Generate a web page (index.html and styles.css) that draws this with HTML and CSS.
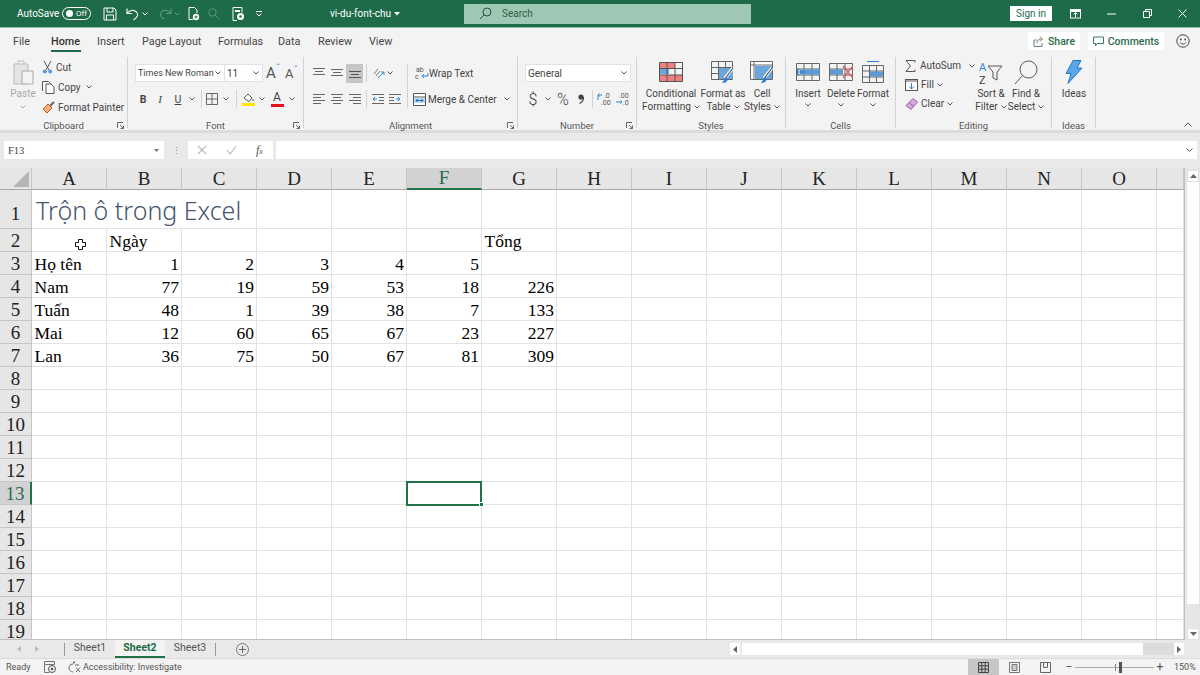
FILE: index.html
```html
<!DOCTYPE html>
<html lang="vi">
<head>
<meta charset="utf-8">
<title>vi-du-font-chu - Excel</title>
<link rel="stylesheet" href="styles.css">
</head>
<body>
<div class="app">
  <header class="titlebar">
    <span class="autosave">AutoSave</span>
    <span class="toggle"><i class="knob"></i><span>Off</span></span>
    <svg class="qa qa-save" width="14" height="14" viewBox="0 0 14 14"><path d="M1 1h10l2 2v10H1z M4 1v4h6V1 M3.500 13V8h7v5" fill="none" stroke="#fff"/></svg>
    <svg class="qa qa-undo" width="13" height="14" viewBox="0 0 13 14"><path d="M1 1.500v5h5 M1.500 6C3.500 3 8 2.500 10.500 5c2 2.200 1.500 5-3 8" fill="none" stroke="#fff" stroke-width="1.100"/></svg>
    <svg class="qa qa-ch" width="6" height="4" viewBox="0 0 6 4"><path d="M.5.500 3 3 5.500.5" fill="none" stroke="#fff"/></svg>
    <svg class="qa qa-redo" width="13" height="13" viewBox="0 0 13 13"><path d="M12 1.500v5H7 M11.500 6C9.500 3 5 2.500 2.500 5c-2 2.200-1.500 5 3 7" fill="none" stroke="#5f9a80" stroke-width="1.100"/></svg>
    <svg class="qa qa-ch2" width="6" height="4" viewBox="0 0 6 4"><path d="M.5.500 3 3 5.500.5" fill="none" stroke="#5f9a80"/></svg>
    <svg class="qa qa-doc" width="12" height="14" viewBox="0 0 12 14"><path d="M1 .5h5.500L9 3v3M1 .5v12h4" fill="none" stroke="#fff"/><circle cx="8" cy="10" r="3.200" fill="#fff"/><path d="M6.500 10h3M8 8.500v3" stroke="#1d6b48"/></svg>
    <svg class="qa qa-find" width="12" height="12" viewBox="0 0 12 12"><circle cx="4.500" cy="4.500" r="3.700" fill="none" stroke="#5f9a80"/><path d="M7.500 7.500 11.500 11.500" stroke="#5f9a80"/></svg>
    <svg class="qa qa-doc2" width="13" height="14" viewBox="0 0 13 14"><path d="M1 .5h9v5M1 .5v13h4" fill="none" stroke="#fff"/><rect x="3" y="3" width="5" height="2" fill="#fff"/><circle cx="8.500" cy="9.500" r="3.500" fill="#fff"/><circle cx="8.500" cy="9.500" r="1.200" fill="#1d6b48"/></svg>
    <svg class="qa qa-more" width="8" height="6" viewBox="0 0 8 6"><path d="M1 .5h6M1.500 2.500 4 5l2.500-2.500" fill="none" stroke="#fff"/></svg>
    <span class="filename">vi-du-font-chu<svg width="6" height="4" viewBox="0 0 6 4"><path d="M0 0h6L3 3.500z" fill="#fff"/></svg></span>
    <div class="search">
      <svg width="13" height="13" viewBox="0 0 13 13"><circle cx="8" cy="5" r="4" fill="none" stroke="#20563d"/><path d="M5 8 1 12" stroke="#20563d"/></svg>
      <span>Search</span>
    </div>
    <span class="signin">Sign in</span>
    <svg class="win win-ribbon" width="11" height="10" viewBox="0 0 11 10"><rect x=".5" y=".5" width="10" height="8.500" fill="none" stroke="#fff"/><path d="M.5 2h10" stroke="#fff" stroke-width="2"/><path d="M5.500 8V4M3.500 5.500 5.500 3.500l2 2" fill="none" stroke="#fff"/></svg>
    <svg class="win win-min" width="9" height="2" viewBox="0 0 9 2"><path d="M0 1h9" stroke="#fff"/></svg>
    <svg class="win win-max" width="9" height="9" viewBox="0 0 9 9"><path d="M.5 2.500h6v6h-6z M2.500 2.500v-2h6v6h-2" fill="none" stroke="#fff"/></svg>
    <svg class="win win-close" width="9" height="9" viewBox="0 0 9 9"><path d="m.5.500 8 8M8.500.5l-8 8" stroke="#fff"/></svg>
  </header>

  <nav class="tabs">
    <span class="tab t-file">File</span>
    <span class="tab t-home">Home</span>
    <span class="tab t-insert">Insert</span>
    <span class="tab t-layout">Page Layout</span>
    <span class="tab t-formulas">Formulas</span>
    <span class="tab t-data">Data</span>
    <span class="tab t-review">Review</span>
    <span class="tab t-view">View</span>
    <span class="pill share"><svg width="11" height="11" viewBox="0 0 11 11"><path d="M3.500 4H1v6.500h8V7 M4 7c0-3 2-4 4.500-4M7 .5 9.500 3 7 5.500" fill="none" stroke="#6b7d74"/></svg>Share</span>
    <span class="pill comments"><svg width="11" height="11" viewBox="0 0 11 11"><path d="M.5 1h10v6.500H4L2.500 10V7.500H.5z" fill="none" stroke="#3c7a5d"/></svg>Comments</span>
    <svg class="smiley" width="14" height="14" viewBox="0 0 14 14"><circle cx="7" cy="7" r="6.200" fill="none" stroke="#444"/><circle cx="4.800" cy="5.500" r=".9" fill="#444"/><circle cx="9.200" cy="5.500" r=".9" fill="#444"/><path d="M4 8.500c1.500 2 4.500 2 6 0" fill="none" stroke="#444"/></svg>
  </nav>

  <section class="ribbon">
    <div class="group g-clip">
      <div class="body">
        <div class="paste">
          <svg width="24" height="25" viewBox="0 0 24 25"><path d="M3 4h14v20H3z" fill="#e4e4e4" stroke="#bbb"/><path d="M7 4V1h6v3" fill="none" stroke="#bbb"/><path d="M11 11h11v13H11z" fill="#f3f3f3" stroke="#aaa"/></svg>
          <span class="dim">Paste</span>
          <svg class="chev" width="6" height="4" viewBox="0 0 6 4"><path d="M.5.500 3 3 5.500.5" fill="none" stroke="#aaa"/></svg>
        </div>
        <div class="clip-list">
          <div class="clip-row"><svg width="11" height="13" viewBox="0 0 11 13"><path d="M2 0 7 9M9 0 4 9" stroke="#555" fill="none"/><circle cx="2.800" cy="10.500" r="2" fill="#5b9bd5"/><circle cx="8.200" cy="10.500" r="2" fill="#5b9bd5"/></svg><span>Cut</span></div>
          <div class="clip-row"><svg width="13" height="13" viewBox="0 0 13 13"><path d="M.5 10V.5h6l2 2M4 3h5l3 3v6.500H4z" fill="#fff" stroke="#555"/></svg><span>Copy</span><svg class="chev-s" width="6" height="4" viewBox="0 0 6 4"><path d="M.5.500 3 3 5.500.5" fill="none" stroke="#555"/></svg></div>
          <div class="clip-row"><svg width="13" height="13" viewBox="0 0 13 13"><path d="M1 8 6 3l4 4-5 5z" fill="#f4b183" stroke="#c55a11"/><path d="M8 5l4-4" stroke="#666" stroke-width="2"/></svg><span>Format Painter</span></div>
        </div>
      </div>
      <div class="label">Clipboard<svg class="launch" width="7" height="7" viewBox="0 0 7 7"><path d="M.5 6V.5H6M3 3l3.500 3.500M6.500 3.500v3h-3" fill="none" stroke="#666"/></svg></div>
    </div>

    <div class="group g-font">
      <div class="body col">
        <div class="row first">
          <div class="select font-name"><span>Times New Roman</span><svg width="6" height="4" viewBox="0 0 6 4"><path d="M.5.500 3 3 5.500.5" fill="none" stroke="#555"/></svg></div>
          <div class="select font-size"><span>11</span><svg width="6" height="4" viewBox="0 0 6 4"><path d="M.5.500 3 3 5.500.5" fill="none" stroke="#555"/></svg></div>
          <span class="grow">A<small>ˆ</small></span>
          <span class="shrink">A<small>ˇ</small></span>
        </div>
        <div class="row second">
          <b class="btn w16 fb">B</b><i class="btn w18 fi">I</i><u class="btn w18 fu">U</u>
          <span class="btn w10"><svg width="6" height="4" viewBox="0 0 6 4"><path d="M.5.500 3 3 5.500.5" fill="none" stroke="#555"/></svg></span>
          <span class="btn w8"><i class="vsep"></i></span>
          <span class="btn w14"><svg width="12" height="12" viewBox="0 0 12 12"><path d="M.5.500h11v11H.5zM6 .5v11M.5 6h11" fill="none" stroke="#666"/></svg></span>
          <span class="btn w14"><svg width="6" height="4" viewBox="0 0 6 4"><path d="M.5.500 3 3 5.500.5" fill="none" stroke="#555"/></svg></span>
          <span class="btn w6"><i class="vsep"></i></span>
          <span class="btn w18"><svg width="13" height="14" viewBox="0 0 13 14"><path d="M2 6 6 2l4 4-3 3.500z" fill="#fff" stroke="#555"/><path d="M11 7v2" stroke="#555"/><rect y="11" width="13" height="3" fill="#ffe600"/></svg></span>
          <span class="btn w10"><svg width="6" height="4" viewBox="0 0 6 4"><path d="M.5.500 3 3 5.500.5" fill="none" stroke="#555"/></svg></span>
          <span class="btn w20 fa">A<i class="redbar"></i></span>
          <span class="btn w9"><svg width="6" height="4" viewBox="0 0 6 4"><path d="M.5.500 3 3 5.500.5" fill="none" stroke="#555"/></svg></span>
        </div>
      </div>
      <div class="label">Font<svg class="launch" width="7" height="7" viewBox="0 0 7 7"><path d="M.5 6V.5H6M3 3l3.500 3.500M6.500 3.500v3h-3" fill="none" stroke="#666"/></svg></div>
    </div>

    <div class="group g-align">
      <div class="body">
        <div class="col align-left">
          <div class="row first">
            <span class="btn w18 tall"><svg width="12" height="10" viewBox="0 0 12 10"><path d="M0 .5h12M2 3.500h8M0 6.500h12" stroke="#666"/></svg></span>
            <span class="btn w18 tall"><svg width="12" height="10" viewBox="0 0 12 10"><path d="M0 1.500h12M2 4.500h8M0 7.500h12" stroke="#666"/></svg></span>
            <span class="btn w17 tall on"><svg width="12" height="10" viewBox="0 0 12 10"><path d="M0 3.500h12M2 6.500h8M0 9.500h12" stroke="#555"/></svg></span>
            <span class="btn w7 tall"><i class="vsep"></i></span>
            <span class="btn w16 tall"><svg width="13" height="13" viewBox="0 0 13 13"><path d="m2 7 4-5M4 9l4-5" stroke="#777"/><path d="M6 11 12 5M12 5v3M12 5H9" fill="none" stroke="#2b88d8"/></svg></span>
            <span class="btn w8 tall"><svg width="6" height="4" viewBox="0 0 6 4"><path d="M.5.500 3 3 5.500.5" fill="none" stroke="#555"/></svg></span>
          </div>
          <div class="row second">
            <span class="btn w18"><svg width="12" height="10" viewBox="0 0 12 10"><path d="M0 .5h12M0 3.500h8M0 6.500h12M0 9.500h8" stroke="#666"/></svg></span>
            <span class="btn w18"><svg width="12" height="10" viewBox="0 0 12 10"><path d="M0 .5h12M2 3.500h8M0 6.500h12M2 9.500h8" stroke="#666"/></svg></span>
            <span class="btn w17"><svg width="12" height="10" viewBox="0 0 12 10"><path d="M0 .5h12M4 3.500h8M0 6.500h12M4 9.500h8" stroke="#666"/></svg></span>
            <span class="btn w7"><i class="vsep"></i></span>
            <span class="btn w16"><svg width="12" height="10" viewBox="0 0 12 10"><path d="M0 .5h12M7 3.500h5M7 6.500h5M0 9.500h12" stroke="#666"/><path d="M5 5H1M3 3 1 5l2 2" fill="none" stroke="#2b88d8"/></svg></span>
            <span class="btn w18"><svg width="12" height="10" viewBox="0 0 12 10"><path d="M0 .5h12M0 3.500h5M0 6.500h5M0 9.500h12" stroke="#666"/><path d="M7 5h4M9 3l2 2-2 2" fill="none" stroke="#2b88d8"/></svg></span>
          </div>
        </div>
        <i class="align-sep"></i>
        <div class="col align-right">
          <div class="row first"><span class="wrap-item"><svg width="14" height="14" viewBox="0 0 14 14"><text x="1" y="6" class="ico-txt">ab</text><text x="0" y="13" class="ico-txt">c</text><path d="M13 7v3H7M9 8l-2 2 2 2" fill="none" stroke="#2b88d8"/></svg>Wrap Text</span></div>
          <div class="row second"><span class="wrap-item"><svg class="merge-ico" width="13" height="13" viewBox="0 0 13 13"><path d="M.5.500h12v12H.5z" fill="#fff" stroke="#555"/><path d="M.5 4h12" stroke="#555"/><rect x="1" y="5" width="11" height="5" fill="#bcdcf4"/><path d="M3 7.500h7M3 7.500l1.500-1.500M3 7.500 4.500 9M10 7.500 8.500 6M10 7.500 8.500 9" fill="none" stroke="#106ebe"/></svg>Merge &amp; Center<svg class="merge-ch" width="6" height="4" viewBox="0 0 6 4"><path d="M.5.500 3 3 5.500.5" fill="none" stroke="#555"/></svg></span></div>
        </div>
      </div>
      <div class="label">Alignment<svg class="launch" width="7" height="7" viewBox="0 0 7 7"><path d="M.5 6V.5H6M3 3l3.500 3.500M6.500 3.500v3h-3" fill="none" stroke="#666"/></svg></div>
    </div>

    <div class="group g-num">
      <div class="body col">
        <div class="row first"><div class="select num-format"><span>General</span><svg width="6" height="4" viewBox="0 0 6 4"><path d="M.5.500 3 3 5.500.5" fill="none" stroke="#555"/></svg></div></div>
        <div class="row second">
          <span class="btn w16 big-sym">$</span>
          <span class="btn w14"><svg width="6" height="4" viewBox="0 0 6 4"><path d="M.5.500 3 3 5.500.5" fill="none" stroke="#555"/></svg></span>
          <span class="btn w16 big-sym">%</span>
          <span class="btn w19"><svg width="6" height="10" viewBox="0 0 6 10"><circle cx="3" cy="3" r="2.600" fill="#444"/><path d="M5.600 3C5.600 6 4 8.500 1.500 9.500" fill="none" stroke="#444" stroke-width="1.300"/></svg></span>
          <span class="btn w5"><i class="vsep"></i></span>
          <span class="btn w18"><svg width="14" height="14" viewBox="0 0 14 14"><text x="7" y="6" class="ico-num">.0</text><text x="4" y="13" class="ico-num">.00</text><path d="M5 3H1M2.500 1.500 1 3l1.500 1.500M1 3v5" fill="none" stroke="#2b88d8"/></svg></span>
          <span class="btn w18"><svg width="14" height="14" viewBox="0 0 14 14"><text x="4" y="6" class="ico-num">.00</text><text x="8" y="13" class="ico-num">.0</text><path d="M1 10h6M5.500 8.500 7 10l-1.500 1.500" fill="none" stroke="#2b88d8"/></svg></span>
        </div>
      </div>
      <div class="label">Number<svg class="launch" width="7" height="7" viewBox="0 0 7 7"><path d="M.5 6V.5H6M3 3l3.500 3.500M6.500 3.500v3h-3" fill="none" stroke="#666"/></svg></div>
    </div>

    <div class="group g-styles">
      <div class="body">
        <div class="big b-cond">
          <div class="big-ico"><svg width="24" height="20" viewBox="0 0 24 20"><rect x="1" y="1" width="15" height="5" fill="#f08080"/><rect x="1" y="7" width="9" height="5" fill="#6aa5dc"/><rect x="1" y="13" width="22" height="6" fill="#f08080"/><path d="M.5.500h23v19H.5zM8 .5v19M16 .5v19M.5 6.500h23M.5 13h23" fill="none" stroke="#555"/></svg></div>
          <span>Conditional</span><span>Formatting<svg class="inl" width="6" height="4" viewBox="0 0 6 4"><path d="M.5.500 3 3 5.500.5" fill="none" stroke="#555"/></svg></span>
        </div>
        <div class="big b-fmt">
          <div class="big-ico"><svg width="24" height="23" viewBox="0 0 24 23"><path d="M.5.500h21v18H.5zM7.500.5v18M14.500.5v18M.5 6.500h21M.5 12.500h21" fill="none" stroke="#666"/><rect x="8" y="7" width="14" height="11" fill="#6aa5dc"/><path d="M22 7 14 17" stroke="#fff" stroke-width="3"/><path d="M22 7 14.500 17" stroke="#555" stroke-width="1.200"/><path d="M15 16l-4 6c3 0 5-1 6-4z" fill="#2b7cd3"/></svg></div>
          <span>Format as</span><span>Table<svg class="inl" width="6" height="4" viewBox="0 0 6 4"><path d="M.5.500 3 3 5.500.5" fill="none" stroke="#555"/></svg></span>
        </div>
        <div class="big b-cell">
          <div class="big-ico"><svg width="24" height="23" viewBox="0 0 24 23"><path d="M.5.500h22v18H.5z" fill="#fff" stroke="#666"/><path d="M.5 4h22M4 .5v18" stroke="#666"/><rect x="5" y="5" width="17" height="13" fill="#6aa5dc"/><path d="M22 7 14 17" stroke="#fff" stroke-width="3"/><path d="M22 7 14.500 17" stroke="#555" stroke-width="1.200"/><path d="M15 16l-4 6c3 0 5-1 6-4z" fill="#2b7cd3"/></svg></div>
          <span>Cell</span><span>Styles<svg class="inl" width="6" height="4" viewBox="0 0 6 4"><path d="M.5.500 3 3 5.500.5" fill="none" stroke="#555"/></svg></span>
        </div>
      </div>
      <div class="label">Styles</div>
    </div>

    <div class="group g-cells">
      <div class="body">
        <div class="big b-ins">
          <div class="big-ico"><svg width="24" height="20" viewBox="0 0 24 20"><path d="M.5 1.500h23v17H.5zM8 1.500v17M16 1.500v17M.5 7h23M.5 13h23" fill="none" stroke="#666"/><rect x="4" y="7.500" width="20" height="5" fill="#5b9bd5"/><path d="M8 10H0M3 7l-3 3 3 3" fill="none" stroke="#1f6fb5" stroke-width="1.200"/></svg></div>
          <span>Insert</span><svg class="chev" width="6" height="4" viewBox="0 0 6 4"><path d="M.5.500 3 3 5.500.5" fill="none" stroke="#555"/></svg>
        </div>
        <div class="big b-del">
          <div class="big-ico"><svg width="24" height="20" viewBox="0 0 24 20"><path d="M.5 1.500h23v17H.5zM8 1.500v17M16 1.500v17M.5 7h23M.5 13h23" fill="#f3f3f3" stroke="#666"/><rect x="1" y="7.500" width="13" height="5" fill="#5b9bd5"/><path d="m14 4 10 12M24 4 14 16" stroke="#e0584f" stroke-width="1.200"/></svg></div>
          <span>Delete</span><svg class="chev" width="6" height="4" viewBox="0 0 6 4"><path d="M.5.500 3 3 5.500.5" fill="none" stroke="#555"/></svg>
        </div>
        <div class="big b-for">
          <div class="big-ico"><svg width="22" height="23" viewBox="0 0 22 23"><path d="M5 .5h12" stroke="#2b7cd3"/><path d="M.5 4.500h21v17H.5zM7.500 4.500v17M14.500 4.500v17M.5 10h21M.5 16h21" fill="none" stroke="#666"/><rect x="8" y="10.500" width="13" height="5" fill="#5b9bd5"/></svg></div>
          <span>Format</span><svg class="chev" width="6" height="4" viewBox="0 0 6 4"><path d="M.5.500 3 3 5.500.5" fill="none" stroke="#555"/></svg>
        </div>
      </div>
      <div class="label">Cells</div>
    </div>

    <div class="group g-edit">
      <div class="body">
        <div class="edit-list">
          <div class="edit-row"><svg class="sum" width="11" height="12" viewBox="0 0 11 12"><path d="M10 2.500V.5H1l4.500 5.500L1 11.500h9V9.500" fill="none" stroke="#555"/></svg><span>AutoSum</span><svg class="auto-ch" width="6" height="4" viewBox="0 0 6 4"><path d="M.5.500 3 3 5.500.5" fill="none" stroke="#555"/></svg></div>
          <div class="edit-row"><svg width="13" height="12" viewBox="0 0 13 12"><rect x=".5" y=".5" width="12" height="11" fill="#fff" stroke="#555"/><path d="M.5 2h12" stroke="#555"/><path d="M6.500 4v6M4 7.500 6.500 10 9 7.500" fill="none" stroke="#2b7cd3"/></svg><span>Fill<svg class="inl" width="6" height="4" viewBox="0 0 6 4"><path d="M.5.500 3 3 5.500.5" fill="none" stroke="#555"/></svg></span></div>
          <div class="edit-row"><svg width="13" height="12" viewBox="0 0 13 12"><path d="M8 .5 12.500 4 6 11.500 1 7.500z" fill="#d8a8dc" stroke="#a35dab"/><path d="M4 4.500 9 8.500" stroke="#a35dab"/></svg><span>Clear<svg class="inl" width="6" height="4" viewBox="0 0 6 4"><path d="M.5.500 3 3 5.500.5" fill="none" stroke="#555"/></svg></span></div>
        </div>
        <div class="big b-sort">
          <div class="big-ico"><svg width="24" height="26" viewBox="0 0 24 26"><text x="0" y="12" class="ico-az blue">A</text><text x="0" y="25" class="ico-az">Z</text><path d="M9 7h14l-5 6v8l-4-2v-6z" fill="none" stroke="#555"/></svg></div>
          <span>Sort &amp;</span><span>Filter<svg class="inl" width="6" height="4" viewBox="0 0 6 4"><path d="M.5.500 3 3 5.500.5" fill="none" stroke="#555"/></svg></span>
        </div>
        <div class="big b-find">
          <div class="big-ico"><svg width="24" height="25" viewBox="0 0 24 25"><circle cx="14.500" cy="9.500" r="8.500" fill="none" stroke="#555"/><path d="M8.500 15.500 1 24" stroke="#555"/></svg></div>
          <span>Find &amp;</span><span>Select<svg class="inl" width="6" height="4" viewBox="0 0 6 4"><path d="M.5.500 3 3 5.500.5" fill="none" stroke="#555"/></svg></span>
        </div>
      </div>
      <div class="label">Editing</div>
    </div>

    <div class="group g-ideas">
      <div class="body">
        <div class="big b-ideas">
          <div class="big-ico"><svg width="18" height="24" viewBox="0 0 18 24"><path d="M8 .5h8L12 8h5L3 23.500l3-10H1z" fill="#5ba7e6" stroke="#1f78c8"/></svg></div>
          <span>Ideas</span>
        </div>
      </div>
      <div class="label">Ideas</div>
    </div>
    <svg class="collapse" width="8" height="5" viewBox="0 0 8 5"><path d="M.5 4.500 4 1l3.500 3.500" fill="none" stroke="#555"/></svg>
  </section>

  <section class="formula">
    <div class="namebox"><span>F13</span><svg width="5" height="3" viewBox="0 0 5 3"><path d="M0 0h5L2.500 3z" fill="#777"/></svg></div>
    <span class="dots"></span>
    <div class="fx-box">
      <svg width="10" height="10" viewBox="0 0 10 10"><path d="m1 1 8 8M9 1 1 9" stroke="#bbb" stroke-width="1.200"/></svg>
      <svg width="11" height="10" viewBox="0 0 11 10"><path d="m1 5 3 4 6-8" fill="none" stroke="#bbb" stroke-width="1.200"/></svg>
      <i class="fx">f<small>x</small></i>
    </div>
    <div class="fx-input"><svg width="7" height="4" viewBox="0 0 7 4"><path d="m.5.500 3 3 3-3" fill="none" stroke="#555"/></svg></div>
  </section>

  <main class="sheet-area">
    <div class="grid-wrap">
      <table class="sheet">
        <colgroup><col class="c-hdr"><col class="c-w"><col class="c-w"><col class="c-w"><col class="c-w"><col class="c-w"><col class="c-w"><col class="c-w"><col class="c-w"><col class="c-w"><col class="c-w"><col class="c-w"><col class="c-w"><col class="c-w"><col class="c-w"><col class="c-w"><col class="c-p"></colgroup>
        <thead>
          <tr class="r-head"><th class="corner"><svg width="17" height="16" viewBox="0 0 17 16"><path d="M16 0v16H0z" fill="#b5b5b5"/></svg></th><th>A</th><th>B</th><th>C</th><th>D</th><th>E</th><th class="on-col">F</th><th>G</th><th>H</th><th>I</th><th>J</th><th>K</th><th>L</th><th>M</th><th>N</th><th>O</th><th></th></tr>
        </thead>
        <tbody>
          <tr class="r1"><th>1</th><td colspan="3" class="title">Trộn ô trong Excel</td><td></td><td></td><td></td><td></td><td></td><td></td><td></td><td></td><td></td><td></td><td></td><td></td><td></td></tr>
          <tr><th>2</th><td class="has-cursor"><svg class="cursor" width="11" height="11" viewBox="0 0 11 11"><path d="M3.500.5h4v3h3v4h-3v3h-4v-3h-3v-4h3z" fill="#fff" stroke="#111"/></svg></td><td>Ngày</td><td></td><td></td><td></td><td></td><td>Tổng</td><td></td><td></td><td></td><td></td><td></td><td></td><td></td><td></td><td></td></tr>
          <tr><th>3</th><td>Họ tên</td><td class="n">1</td><td class="n">2</td><td class="n">3</td><td class="n">4</td><td class="n">5</td><td></td><td></td><td></td><td></td><td></td><td></td><td></td><td></td><td></td><td></td></tr>
          <tr><th>4</th><td>Nam</td><td class="n">77</td><td class="n">19</td><td class="n">59</td><td class="n">53</td><td class="n">18</td><td class="n">226</td><td></td><td></td><td></td><td></td><td></td><td></td><td></td><td></td><td></td></tr>
          <tr><th>5</th><td>Tuấn</td><td class="n">48</td><td class="n">1</td><td class="n">39</td><td class="n">38</td><td class="n">7</td><td class="n">133</td><td></td><td></td><td></td><td></td><td></td><td></td><td></td><td></td><td></td></tr>
          <tr><th>6</th><td>Mai</td><td class="n">12</td><td class="n">60</td><td class="n">65</td><td class="n">67</td><td class="n">23</td><td class="n">227</td><td></td><td></td><td></td><td></td><td></td><td></td><td></td><td></td><td></td></tr>
          <tr><th>7</th><td>Lan</td><td class="n">36</td><td class="n">75</td><td class="n">50</td><td class="n">67</td><td class="n">81</td><td class="n">309</td><td></td><td></td><td></td><td></td><td></td><td></td><td></td><td></td><td></td></tr>
          <tr><th>8</th><td></td><td></td><td></td><td></td><td></td><td></td><td></td><td></td><td></td><td></td><td></td><td></td><td></td><td></td><td></td><td></td></tr>
          <tr><th>9</th><td></td><td></td><td></td><td></td><td></td><td></td><td></td><td></td><td></td><td></td><td></td><td></td><td></td><td></td><td></td><td></td></tr>
          <tr><th>10</th><td></td><td></td><td></td><td></td><td></td><td></td><td></td><td></td><td></td><td></td><td></td><td></td><td></td><td></td><td></td><td></td></tr>
          <tr><th>11</th><td></td><td></td><td></td><td></td><td></td><td></td><td></td><td></td><td></td><td></td><td></td><td></td><td></td><td></td><td></td><td></td></tr>
          <tr><th>12</th><td></td><td></td><td></td><td></td><td></td><td></td><td></td><td></td><td></td><td></td><td></td><td></td><td></td><td></td><td></td><td></td></tr>
          <tr><th class="on-row">13</th><td></td><td></td><td></td><td></td><td></td><td class="selected"></td><td></td><td></td><td></td><td></td><td></td><td></td><td></td><td></td><td></td><td></td></tr>
          <tr><th>14</th><td></td><td></td><td></td><td></td><td></td><td></td><td></td><td></td><td></td><td></td><td></td><td></td><td></td><td></td><td></td><td></td></tr>
          <tr><th>15</th><td></td><td></td><td></td><td></td><td></td><td></td><td></td><td></td><td></td><td></td><td></td><td></td><td></td><td></td><td></td><td></td></tr>
          <tr><th>16</th><td></td><td></td><td></td><td></td><td></td><td></td><td></td><td></td><td></td><td></td><td></td><td></td><td></td><td></td><td></td><td></td></tr>
          <tr><th>17</th><td></td><td></td><td></td><td></td><td></td><td></td><td></td><td></td><td></td><td></td><td></td><td></td><td></td><td></td><td></td><td></td></tr>
          <tr><th>18</th><td></td><td></td><td></td><td></td><td></td><td></td><td></td><td></td><td></td><td></td><td></td><td></td><td></td><td></td><td></td><td></td></tr>
          <tr><th>19</th><td></td><td></td><td></td><td></td><td></td><td></td><td></td><td></td><td></td><td></td><td></td><td></td><td></td><td></td><td></td><td></td></tr>
        </tbody>
      </table>
    </div>
    <div class="vscroll">
      <span class="sb-btn"><svg width="7" height="4" viewBox="0 0 7 4"><path d="M0 4h7L3.500 0z" fill="#666"/></svg></span>
      <span class="sb-thumb"></span>
      <span class="sb-btn"><svg width="7" height="4" viewBox="0 0 7 4"><path d="M0 0h7L3.500 4z" fill="#666"/></svg></span>
    </div>
  </main>

  <section class="sheetbar">
    <span class="nav-arrows"><svg width="4" height="6" viewBox="0 0 4 6"><path d="M4 0v6L0 3z" fill="#bbb"/></svg><svg width="4" height="6" viewBox="0 0 4 6"><path d="M0 0v6l4-3z" fill="#bbb"/></svg></span>
    <span class="sheet-sep"></span>
    <span class="sheet-tab">Sheet1</span>
    <span class="sheet-tab active">Sheet2</span>
    <span class="sheet-tab">Sheet3</span>
    <span class="sheet-sep"></span>
    <svg class="add-sheet" width="13" height="13" viewBox="0 0 13 13"><circle cx="6.500" cy="6.500" r="6" fill="none" stroke="#777"/><path d="M3 6.500h7M6.500 3v7" stroke="#666"/></svg>
    <div class="hscroll">
      <span class="hs-btn"><svg width="4" height="7" viewBox="0 0 4 7"><path d="M4 0v7L0 3.500z" fill="#666"/></svg></span>
      <span class="hs-thumb"></span>
      <span class="hs-track"></span>
      <span class="hs-btn"><svg width="4" height="7" viewBox="0 0 4 7"><path d="M0 0v7l4-3.500z" fill="#666"/></svg></span>
    </div>
  </section>

  <footer class="status">
    <span class="ready">Ready</span>
    <svg class="macro" width="12" height="12" viewBox="0 0 12 12"><path d="M.5.500h10v3H.5zM.5 3.500v8h5" fill="none" stroke="#777"/><circle cx="8" cy="8" r="3.500" fill="none" stroke="#555"/><circle cx="8" cy="8" r="1.300" fill="#555"/></svg>
    <svg class="access" width="13" height="12" viewBox="0 0 13 12"><circle cx="6" cy="1.500" r="1" fill="#555"/><path d="M5 3C2 3 1 5 1 7s2 4 4 4M7 4h4M8 6.500l4 4.500M12 6.500 8 11" fill="none" stroke="#666"/></svg>
    <span class="access-txt">Accessibility: Investigate</span>
    <div class="views">
      <span class="view on"><svg width="11" height="11" viewBox="0 0 11 11"><path d="M.5.500h10v10H.5zM3.800.5v10M7.200.5v10M.5 3.800h10M.5 7.200h10" fill="none" stroke="#444"/></svg></span>
      <span class="view"><svg width="11" height="11" viewBox="0 0 11 11"><path d="M.5.500h10v10H.5z" fill="none" stroke="#777"/><path d="M3 2.500h5v6H3z" fill="#ccc" stroke="#777"/></svg></span>
      <span class="view"><svg width="11" height="11" viewBox="0 0 11 11"><path d="M.5.500h10v10H.5zM3.500.5v5h4v-5" fill="none" stroke="#666"/></svg></span>
    </div>
    <div class="zoom">
      <span class="zm-sym">−</span>
      <div class="slider"><i class="tick"></i><i class="thumb"></i></div>
      <span class="zm-sym">+</span>
      <span class="zm-val">150%</span>
    </div>
  </footer>
</div>
</body>
</html>
```
FILE: styles.css
```css
* { box-sizing: border-box; }
html, body { margin: 0; padding: 0; }
body { width: 1200px; height: 675px; overflow: hidden; background: #e6e6e6; font-family: Roboto, "Open Sans", sans-serif; font-size: 10px; color: #444; }
svg { display: block; flex: none; }
.app { display: flex; flex-direction: column; width: 1200px; height: 675px; }

/* title bar */
.titlebar { height: 28px; background: #1d6b48; border-bottom: 1px solid #8fbfa7; color: #fff; display: flex; align-items: center; padding-left: 17px; flex: none; }
.autosave { font-size: 10px; width: 45px; }
.toggle { width: 29px; height: 13px; border: 1px solid #fff; border-radius: 7px; display: flex; align-items: center; gap: 3px; padding-left: 3px; font-size: 8px; }
.knob { width: 7px; height: 7px; border-radius: 50%; background: #fff; }
.qa-save { margin-left: 12px; }
.qa-undo { margin-left: 9px; }
.qa-ch { margin-left: 3px; }
.qa-redo { margin-left: 11px; }
.qa-ch2 { margin-left: 2px; }
.qa-doc { margin-left: 8px; }
.qa-find { margin-left: 8px; }
.qa-doc2 { margin-left: 12px; }
.qa-more { margin-left: 10px; }
.filename { margin-left: 67px; width: 134px; display: flex; align-items: center; gap: 3px; font-size: 10px; }
.search { width: 287px; height: 20px; background: #9fc8b4; display: flex; align-items: center; gap: 10px; padding-left: 15px; color: #2f5f49; font-size: 10px; }
.signin { margin-left: auto; width: 42px; height: 15px; background: #fff; color: #1d6b48; display: flex; align-items: center; justify-content: center; font-size: 10px; }
.win-ribbon { margin-left: 18px; }
.win-min { margin-left: 26px; }
.win-max { margin-left: 27px; }
.win-close { margin-left: 26px; margin-right: 13px; }

/* tabs */
.tabs { height: 26px; background: #f3f3f3; display: flex; align-items: center; flex: none; font-size: 10.800px; position: relative; }
.tab { height: 26px; display: flex; align-items: center; color: #444; }
.t-file { margin-left: 13px; width: 38px; }
.t-home { width: 46px; font-weight: 500; position: relative; color: #333; }
.t-home::after { content: ""; position: absolute; left: 0; bottom: 2px; width: 30px; height: 2px; background: #1d6b48; }
.t-insert { width: 45px; }
.t-layout { width: 76px; }
.t-formulas { width: 60px; }
.t-data { width: 40px; }
.t-review { width: 51px; }
.t-view { width: 40px; }
.pill { height: 18px; background: #fff; display: flex; align-items: center; justify-content: center; gap: 4px; color: #2b6b4c; font-weight: 500; font-size: 10.500px; }
.share { margin-left: auto; width: 52px; }
.comments { margin-left: 8px; width: 76px; }
.smiley { margin-left: 12px; margin-right: 10px; }

/* ribbon */
.ribbon { height: 79px; background: #f3f3f3; border-bottom: 3px solid #dcdcdc; padding-top: 3px; display: flex; flex: none; }
.group { height: 71px; border-right: 1px solid #d2d2d2; display: flex; flex-direction: column; flex: none; }
.body { height: 63px; display: flex; }
.body.col, .col { flex-direction: column; display: flex; }
.label { height: 12px; line-height: 12px; font-size: 9.500px; color: #555; text-align: center; position: relative; margin-bottom: -4px; }
.launch { position: absolute; right: 3px; top: 2px; }
.g-clip { width: 128px; }
.g-font { width: 176px; }
.g-align { width: 214px; }
.g-num { width: 119px; }
.g-styles { width: 149px; }
.g-cells { width: 110px; }
.g-edit { width: 156px; }
.g-ideas { width: 44px; }
.collapse { margin: 65px 0 0 88px; }

.paste { width: 30px; margin-left: 8px; padding-top: 3px; display: flex; flex-direction: column; align-items: center; gap: 3px; }
.dim { color: #aaa; }
.chev { margin-top: 3px; }
.clip-list { margin-left: 4px; display: flex; flex-direction: column; }
.clip-row { height: 20px; display: flex; align-items: center; gap: 3px; white-space: nowrap; }
.chev-s { margin-left: 2px; }

.row { display: flex; align-items: center; flex: none; }
.row.first { height: 18px; margin-top: 7px; }
.row.second { height: 18px; margin-top: 8px; }
.g-font .body { padding-left: 7px; }
.g-num .body { padding-left: 7px; }
.select { height: 18px; background: #fff; border: 1px solid #e2e2e2; display: flex; align-items: center; justify-content: space-between; padding: 0 3px 0 2px; white-space: nowrap; }
.font-name { width: 90px; font-size: 9px; }
.font-size { width: 39px; margin-left: -1px; }
.num-format { width: 106px; }
.grow, .shrink { display: flex; color: #555; }
.grow { font-size: 15px; margin-left: 3px; width: 19px; }
.shrink { font-size: 13px; }
.grow small, .shrink small { font-size: 10px; color: #2b7cd3; line-height: 10px; }
.btn { display: flex; align-items: center; justify-content: center; height: 18px; flex: none; text-decoration: none; font-style: normal; }
.tall { height: 19px; }
.w5 { width: 5px; } .w6 { width: 6px; } .w7 { width: 7px; } .w8 { width: 8px; } .w9 { width: 9px; }
.w10 { width: 10px; } .w14 { width: 14px; } .w16 { width: 16px; } .w17 { width: 17px; } .w18 { width: 18px; } .w19 { width: 19px; } .w20 { width: 20px; }
.on { background: #c6c6c6; }
.vsep { width: 1px; height: 18px; background: #d2d2d2; }
.fb { font-weight: 700; font-size: 10.500px; }
.fi { font-style: italic; font-size: 11px; font-family: "Liberation Serif", serif; }
.fu { text-decoration: underline; font-size: 10.500px; }
.fa { flex-direction: column; font-size: 12px; line-height: 11px; }
.redbar { width: 13px; height: 3px; background: #e8101a; margin-top: 1px; }
.ico-txt { font-size: 7px; fill: #555; font-family: Roboto, sans-serif; }
.ico-num { font-size: 7px; fill: #555; font-family: Roboto, sans-serif; }
.ico-az { font-size: 11px; fill: #444; font-family: Roboto, sans-serif; }
.ico-az.blue { fill: #2b88d8; }

.align-left { width: 103px; padding-left: 6px; }
.align-sep { width: 1px; height: 44px; background: #d2d2d2; margin: 7px 0 0 0; }
.align-right { padding-left: 5px; }
.wrap-item { display: flex; align-items: center; gap: 2px; white-space: nowrap; }
.merge-ch { margin-left: 5px; }
.g-align .row.first .wrap-item { margin-left: 2px; gap: 0; }
.big-sym { font-size: 16px; color: #444; font-weight: 300; }

.big { display: flex; flex-direction: column; align-items: center; line-height: 13px; flex: none; white-space: nowrap; }
.big-ico { height: 30px; display: flex; align-items: center; justify-content: center; }
.inl { display: inline-block; margin-left: 3px; vertical-align: 1px; }
.g-styles .body { padding-left: 5px; }
.b-cond { width: 58px; }
.b-fmt { width: 46px; }
.b-cell { width: 32px; }
.g-cells .body { padding-left: 5px; }
.b-ins { width: 34px; }
.b-del { width: 32px; }
.b-for { width: 32px; }
.edit-list { margin-left: 9px; width: 69px; margin-top: -1px; display: flex; flex-direction: column; }
.edit-row { height: 19px; display: flex; align-items: center; gap: 3px; white-space: nowrap; }
.sum { margin-right: 1px; }
.auto-ch { margin-left: 5px; }
.b-sort { width: 34px; }
.b-find { width: 36px; }
.b-ideas { width: 44px; }

/* formula bar */
.formula { height: 35px; background: #e9e9e9; display: flex; align-items: center; padding: 0 3px 1px 4px; flex: none; }
.namebox { width: 160px; height: 18px; background: #fff; display: flex; align-items: center; justify-content: space-between; padding: 0 5px 0 4px; font-family: "Liberation Serif", serif; font-size: 10.500px; }
.dots { width: 24px; height: 9px; background: radial-gradient(circle, #999 0.8px, transparent 1px) center top / 3px 3px repeat-y; }
.fx-box { width: 85px; height: 18px; background: #fff; display: flex; align-items: center; gap: 19px; padding-left: 9px; }
.fx { font-family: "Liberation Serif", serif; font-size: 12px; color: #555; }
.fx small { font-size: 8px; }
.fx-input { margin-left: 3px; flex: 1; height: 18px; background: #fff; display: flex; align-items: center; justify-content: flex-end; padding-right: 4px; }

/* sheet */
.sheet-area { flex: 1; min-height: 0; display: flex; background: #e6e6e6; }
.grid-wrap { width: 1185px; height: 472px; overflow: hidden; border-right: 1px solid #c0c0c0; border-bottom: 1px solid #c0c0c0; background: #fff; }
.sheet { table-layout: fixed; border-collapse: separate; border-spacing: 0; width: 1184px; font-family: "Liberation Serif", serif; color: #000; }
.c-hdr { width: 32px; }
.c-w { width: 75px; }
.c-p { width: 27px; }
.sheet tr { height: 23px; }
.sheet .r-head { height: 22px; }
.sheet .r1 { height: 39px; }
.sheet th { font-weight: 400; background: #e6e6e6; color: #222; font-size: 19px; line-height: 20px; padding: 0; border-right: 1px solid #c6c6c6; border-bottom: 1px solid #c6c6c6; vertical-align: bottom; overflow: hidden; }
.r-head th { border-bottom: 1px solid #a8a8a8; vertical-align: middle; }
tbody th { border-right: 1px solid #a8a8a8; }
.r1 th { padding-bottom: 4px; }
.corner svg { margin-left: 13px; }
.on-col { background: #d2d2d2 !important; color: #2a6d4f !important; border-bottom: 2px solid #217346 !important; }
.on-row { background: #d2d2d2 !important; color: #2a6d4f !important; border-right: 2px solid #217346 !important; }
.sheet td { border-right: 1px solid #e2e2e2; border-bottom: 1px solid #e2e2e2; font-size: 17.500px; line-height: 20px; padding: 0 3px 0 2.500px; vertical-align: bottom; white-space: nowrap; overflow: visible; }
.sheet td.n { text-align: right; padding-right: 2px; }
.sheet td.title { font-family: "Noto Sans", sans-serif; font-weight: 300; font-size: 25px; line-height: 36px; color: #44546a; padding-left: 4px; }
.has-cursor { position: relative; }
.cursor { position: absolute; left: 43px; top: 10px; }
.selected { position: relative; }
.selected::before { content: ""; position: absolute; left: -1px; top: -1px; width: 72px; height: 21px; border: 2px solid #217346; z-index: 2; box-sizing: content-box; }
.selected::after { content: ""; position: absolute; right: -3px; bottom: -3px; width: 3px; height: 3px; background: #217346; border: 1px solid #fff; z-index: 3; box-sizing: content-box; }

.vscroll { width: 15px; padding: 2px 1px 0 2px; display: flex; flex-direction: column; align-items: stretch; }
.sb-btn { height: 12px; background: #fff; border: 1px solid #e0e0e0; display: flex; align-items: center; justify-content: center; flex: none; }
.sb-thumb { height: 422px; background: #fff; flex: none; margin-bottom: 24px; }

/* sheet tabs */
.sheetbar { height: 18px; background: #e9e9e9; display: flex; align-items: center; flex: none; }
.nav-arrows { width: 64px; padding-left: 17px; display: flex; gap: 14px; }
.sheet-sep { width: 1px; height: 13px; background: #999; }
.sheet-tab { width: 50px; height: 18px; display: flex; align-items: center; justify-content: center; font-size: 10.500px; color: #555; padding-bottom: 3px; }
.sheet-tab.active { background: #f3f3f3; color: #1d6b48; font-weight: 700; border-bottom: 2px solid #217346; padding-bottom: 1px; }
.add-sheet { margin-left: 20px; }
.hscroll { margin-left: auto; margin-right: 16px; width: 454px; height: 12px; display: flex; align-items: stretch; }
.hs-btn { width: 10px; background: #fff; display: flex; align-items: center; justify-content: center; flex: none; }
.hs-thumb { width: 401px; background: #fff; margin-left: 2px; }
.hs-track { flex: 1; background: #dcdcdc; }

/* status */
.status { height: 17px; background: #f3f3f3; border-top: 1px solid #dcdcdc; display: flex; align-items: center; flex: none; padding-left: 6px; font-size: 9px; color: #555; }
.ready { width: 38px; }
.access { margin-left: 12px; }
.access-txt { margin-left: 2px; font-size: 9px; }
.views { margin-left: auto; display: flex; height: 16px; }
.view { width: 31px; display: flex; align-items: center; justify-content: center; }
.zoom { width: 139px; display: flex; align-items: center; padding-left: 4px; }
.zm-sym { font-size: 12px; width: 8px; text-align: center; flex: none; }
.slider { width: 79px; height: 1px; background: #aaa; margin: 0 2px; position: relative; flex: none; }
.tick { position: absolute; left: 40px; top: -3px; width: 1px; height: 7px; background: #888; }
.thumb { position: absolute; left: 44px; top: -5px; width: 3px; height: 11px; background: #555; }
.zm-val { margin-left: 10px; }
```
